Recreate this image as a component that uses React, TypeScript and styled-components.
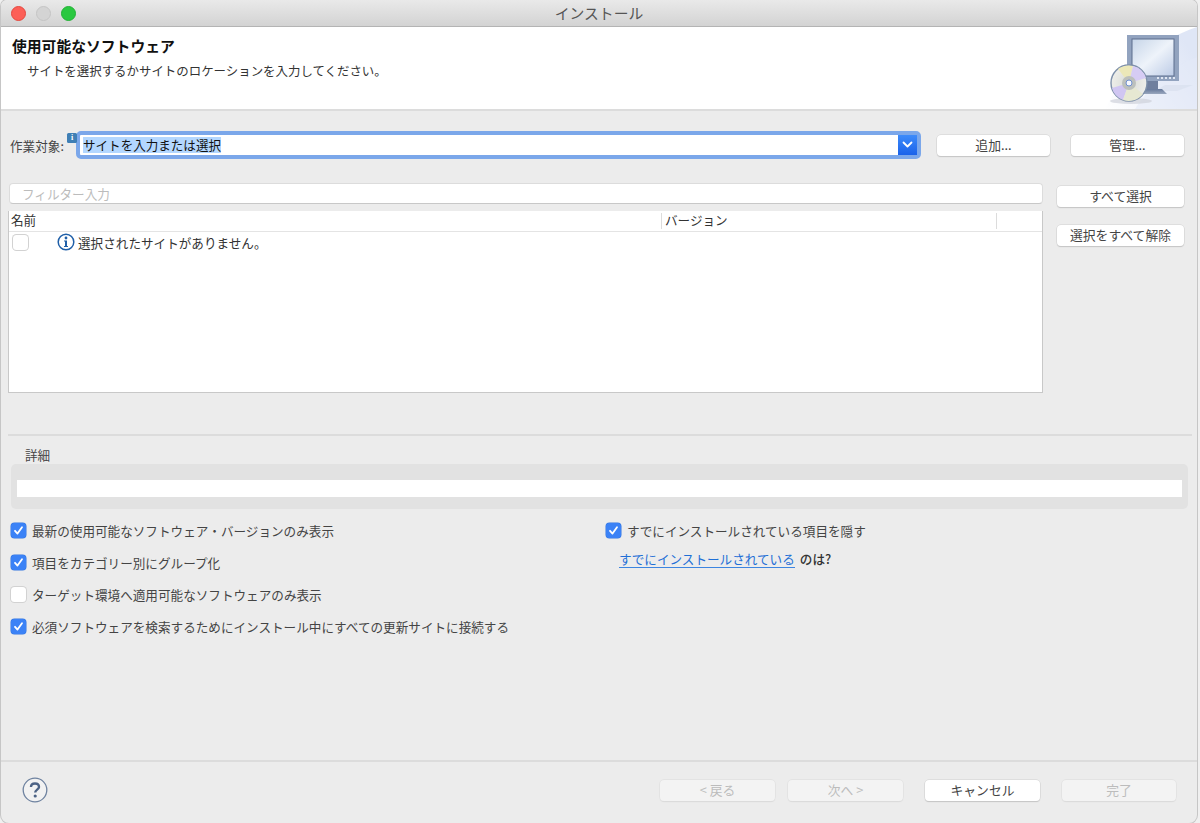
import React from "react";
import styled, { createGlobalStyle } from "styled-components";

const Global = createGlobalStyle`
  html, body { margin: 0; padding: 0; height: 100%; background: #f0f0f0; overflow: hidden; }
  #root { height: 823px; }
  * { box-sizing: border-box; }
`;

const Page = styled.div`
  width: 1200px;
  height: 823px;
  padding: 0 3px 0 1px;
  background: #f0f0f0;
  font-family: "Noto Sans CJK JP", "Liberation Sans", sans-serif;
  font-size: 12.6px;
  color: #3c3c3c;
`;

const Window = styled.div`
  height: 823px;
  display: flex;
  flex-direction: column;
  background: #ececec;
  border-radius: 6px 6px 8px 8px;
  box-shadow: 0 0 0 1px #c6c6c6;
  overflow: hidden;
`;

const TitleBar = styled.div`
  height: 27px;
  flex: none;
  position: relative;
  display: flex;
  align-items: center;
  justify-content: center;
  padding-bottom: 2px;
  background: linear-gradient(#e9e9e9, #d3d3d3);
  border-bottom: 1px solid #b4b4b4;
  font-size: 14.8px;
  color: #555;
`;

const Lights = styled.div`
  position: absolute;
  left: 10px;
  top: 6px;
  display: flex;
  gap: 10px;
`;

const Light = styled.span<{ $c: string; $b: string }>`
  width: 15px;
  height: 15px;
  border-radius: 50%;
  background: ${(p) => p.$c};
  border: 1px solid ${(p) => p.$b};
`;

const Header = styled.header`
  height: 84px;
  flex: none;
  display: flex;
  justify-content: space-between;
  background: #fff;
  border-bottom: 2px solid #dcdcdc;
`;

const HeaderText = styled.div`
  padding: 9px 0 0 11px;
`;

const HeaderTitle = styled.div`
  font-size: 14.8px;
  font-weight: 700;
  line-height: 20px;
  color: #111;
`;

const HeaderSub = styled.div`
  margin: 5px 0 0 15px;
  font-size: 12.45px;
  line-height: 20px;
  color: #333;
`;

const Main = styled.main`
  flex: 1;
  display: flex;
  flex-direction: column;
  min-height: 0;
`;

const WorkRow = styled.div`
  margin-top: 20px;
  height: 28px;
  display: flex;
  align-items: center;
  padding-left: 9px;
`;

const WorkLabel = styled.label`
  width: 66px;
  flex: none;
  padding-top: 1px;
  color: #444;
`;

const Combo = styled.div`
  position: relative;
  width: 845px;
  height: 28px;
  flex: none;
  display: flex;
  border: 4px solid #7ba7ea;
  border-radius: 5px;
  background: #fff;
`;

const ComboBadge = styled.span`
  position: absolute;
  left: -13px;
  top: -2px;
  width: 10px;
  height: 10px;
  border-radius: 1.5px;
  background: #3f7fb5;
  color: #fff;
  font: 700 8px/10px "Liberation Serif", serif;
  text-align: center;
`;

const ComboField = styled.div`
  flex: 1;
  padding-left: 3px;
  display: flex;
  align-items: center;
`;

const Selected = styled.span`
  background: #b3d7ff;
  color: #111;
  font-size: 12.55px;
  line-height: 16px;
`;

const ComboArrow = styled.div`
  width: 19px;
  display: flex;
  align-items: center;
  justify-content: center;
  background: linear-gradient(#3d8bfa, #1a62ea);
`;

const Button = styled.button<{ $w: number; $off?: boolean }>`
  width: ${(p) => p.$w}px;
  height: 21px;
  flex: none;
  padding: 0 0 2px;
  border: none;
  border-radius: 4px;
  font-family: inherit;
  font-size: 12.8px;
  line-height: 19px;
  background: ${(p) => (p.$off ? "#f3f3f3" : "#fff")};
  color: ${(p) => (p.$off ? "#bcbcbc" : "#444")};
  box-shadow: ${(p) =>
    p.$off
      ? "0 0 0 0.5px #dedede, 0 0.5px 1px #d8d8d8"
      : "0 0 0 0.5px #cfcfcf, 0 1px 1px #bdbdbd"};
`;

const AddButton = styled(Button)`
  margin-left: 16px;
`;

const ManageButton = styled(Button)`
  margin-left: 21px;
`;

const SelectArea = styled.div`
  margin-top: 24px;
  padding-left: 7px;
  display: flex;
`;

const LeftCol = styled.div`
  width: 1035px;
  flex: none;
`;

const Filter = styled.div`
  height: 21px;
  margin-left: 1px;
  padding: 0 0 1px 12px;
  display: flex;
  align-items: center;
  background: #fff;
  border-radius: 4px;
  border: 1px solid #dcdcdc;
  border-bottom-color: #c8c8c8;
  color: #bcbcbc;
`;

const Table = styled.div`
  margin-top: 7px;
  height: 182px;
  background: #fff;
  border-left: 1px solid #c8c8c8;
  border-right: 1px solid #c8c8c8;
  border-bottom: 1px solid #c8c8c8;
`;

const TableHead = styled.div`
  height: 21px;
  display: flex;
  align-items: center;
  border-bottom: 1px solid #e4e4e4;
  color: #333;
`;

const HeadCell = styled.div<{ $w: number; $pad: number }>`
  width: ${(p) => p.$w}px;
  height: 16px;
  padding-left: ${(p) => p.$pad}px;
  line-height: 14px;
  border-right: 1px solid #dcdcdc;
`;

const TableRow = styled.div`
  display: flex;
  align-items: center;
  height: 18px;
  margin-top: 1px;
  padding-left: 4px;
`;

const RowIcon = styled.svg`
  margin-left: 29px;
  flex: none;
`;

const RowText = styled.span`
  margin-left: 3px;
  color: #333;
`;

const RightCol = styled.div`
  margin: 3px 0 0 14px;
  display: flex;
  flex-direction: column;
  gap: 18px;
`;

const Separator = styled.div`
  margin: 41px 5px 0 7px;
  height: 2px;
  background: #dcdcdc;
`;

const DetailLabel = styled.div`
  margin: 10px 0 0 24px;
  height: 18px;
  line-height: 17px;
  color: #444;
`;

const DetailBox = styled.div`
  margin: 0 9px 0 10px;
  height: 45px;
  padding: 16px 6px 0;
  background: #e2e2e2;
  border-radius: 5px;
`;

const DetailField = styled.div`
  height: 17px;
  background: #fff;
`;

const Options = styled.div`
  margin-top: 5px;
  display: flex;
`;

const OptionCol = styled.div<{ $w: number }>`
  width: ${(p) => p.$w}px;
  padding-left: 10px;
  flex: none;
`;

const Option = styled.div`
  height: 32px;
  display: flex;
  align-items: center;
  gap: 6px;
  color: #444;
`;

const Box = styled.span<{ $on?: boolean }>`
  width: 15px;
  height: 15px;
  flex: none;
  display: flex;
  align-items: center;
  justify-content: center;
  border-radius: 3.5px;
  background: ${(p) => (p.$on ? "#3b82f6" : "#fff")};
  box-shadow: ${(p) => (p.$on ? "0 0 0 0.5px #3577e0" : "0 0 0 1px #d2d2d2")};
`;

const LinkLine = styled.div`
  height: 26px;
  padding: 4px 0 0 13px;
  display: flex;
  align-items: flex-start;
  gap: 5px;
`;

const DocLink = styled.a`
  color: #1f6fd6;
  line-height: 17px;
  border-bottom: 1px solid #3d85e0;
`;

const Question = styled.span`
  font-weight: 500;
  line-height: 17px;
  color: #333;
`;

const Footer = styled.footer`
  height: 63px;
  flex: none;
  display: flex;
  align-items: flex-start;
  padding: 18px 21px 0 21px;
  border-top: 2px solid #dcdcdc;
`;

const Help = styled.svg`
  flex: none;
  margin-top: -3px;
`;

const FooterButtons = styled.div`
  margin-left: auto;
  display: flex;
`;

const NextButton = styled(Button)`
  margin-left: 13px;
`;

const CancelButton = styled(Button)`
  margin-left: 22px;
`;

const FinishButton = styled(Button)`
  margin-left: 22px;
`;

const Check = () => (
  <svg width="11" height="11" viewBox="0 0 11 11" aria-hidden="true">
    <path d="M2 5.8 L4.5 8.6 L9 2.2" fill="none" stroke="#fff" strokeWidth="1.8" strokeLinecap="round" strokeLinejoin="round" />
  </svg>
);

const CdMonitor = () => (
  <svg width="92" height="82" viewBox="0 0 92 82" aria-hidden="true">
    <defs>
      <linearGradient id="bgGrad" x1="0" y1="1" x2="1" y2="0.4">
        <stop offset="0" stopColor="#ffffff" />
        <stop offset="1" stopColor="#dfe6f6" />
      </linearGradient>
      <linearGradient id="scrGrad" x1="0" y1="0" x2="1" y2="1">
        <stop offset="0" stopColor="#c6d5e8" />
        <stop offset="0.5" stopColor="#eef3fa" />
        <stop offset="1" stopColor="#bccbe6" />
      </linearGradient>
      <linearGradient id="standGrad" x1="0" y1="0" x2="0" y2="1">
        <stop offset="0" stopColor="#66789a" />
        <stop offset="1" stopColor="#9aa8bf" />
      </linearGradient>
      <radialGradient id="discGrad" cx="0.5" cy="0.5" r="0.5">
        <stop offset="0" stopColor="#d8dbd6" />
        <stop offset="1" stopColor="#eeeeea" />
      </radialGradient>
    </defs>
    <path d="M0 82 C20 42 50 14 92 0 L92 82 Z" fill="url(#bgGrad)" />
    <path d="M30 82 C46 58 64 40 92 30 L92 82 Z" fill="#e4e9f7" opacity="0.55" />
    <ellipse cx="26" cy="74" rx="21" ry="3" fill="#cfd2da" opacity="0.7" />
    <path d="M50 64 H72 L88 58 L60 58 Z" fill="#d9dfee" opacity="0.7" />
    <rect x="22" y="8" width="52" height="46" fill="#92a3bf" />
    <rect x="27" y="12" width="42" height="37" fill="url(#scrGrad)" stroke="#5d6e8e" strokeWidth="1" />
    <rect x="40" y="54" width="13" height="8" fill="#6f7f9e" />
    <path d="M37 62 H57 L62 67 H32 Z" fill="url(#standGrad)" />
    <g fill="#dfe6f2">
      <rect x="52" y="50" width="2" height="2" />
      <rect x="56" y="50" width="2" height="2" />
      <rect x="60" y="50" width="2" height="2" />
      <rect x="64" y="50" width="2" height="2" />
      <rect x="68" y="50" width="2" height="2" />
    </g>
    <circle cx="24" cy="56" r="18" fill="url(#discGrad)" stroke="#7e90aa" strokeWidth="1.4" />
    <path d="M24 56 L13 42 A18 18 0 0 1 28 39 Z" fill="#ece8b8" />
    <path d="M24 56 L28 39 A18 18 0 0 1 41 51 Z" fill="#d6ccf4" />
    <path d="M24 56 L7 61 A18 18 0 0 0 18 73 Z" fill="#d0c6f2" />
    <path d="M24 56 L18 73 A18 18 0 0 0 38 67 Z" fill="#e6e8d2" />
    <circle cx="24" cy="56" r="7" fill="#bcc0bc" />
    <circle cx="24" cy="56" r="3" fill="#f6f8fc" stroke="#6f8fd0" strokeWidth="1" />
  </svg>
);

const App = () => (
  <Page>
    <Global />
    <Window>
      <TitleBar>
        <Lights>
          <Light $c="#fc5f57" $b="#e4483f" />
          <Light $c="#d4d4d4" $b="#c4c4c4" />
          <Light $c="#2ac840" $b="#22b136" />
        </Lights>
        インストール
      </TitleBar>
      <Header>
        <HeaderText>
          <HeaderTitle>使用可能なソフトウェア</HeaderTitle>
          <HeaderSub>サイトを選択するかサイトのロケーションを入力してください。</HeaderSub>
        </HeaderText>
        <CdMonitor />
      </Header>
      <Main>
        <WorkRow>
          <WorkLabel>作業対象:</WorkLabel>
          <Combo>
            <ComboBadge>i</ComboBadge>
            <ComboField>
              <Selected>サイトを入力または選択</Selected>
            </ComboField>
            <ComboArrow>
              <svg width="11" height="8" viewBox="0 0 11 8" aria-hidden="true">
                <path d="M1.5 1.5 L5.5 5.5 L9.5 1.5" fill="none" stroke="#fff" strokeWidth="1.8" strokeLinecap="round" strokeLinejoin="round" />
              </svg>
            </ComboArrow>
          </Combo>
          <AddButton $w={113}>追加...</AddButton>
          <ManageButton $w={113}>管理...</ManageButton>
        </WorkRow>
        <SelectArea>
          <LeftCol>
            <Filter>フィルター入力</Filter>
            <Table>
              <TableHead>
                <HeadCell $w={653} $pad={2}>名前</HeadCell>
                <HeadCell $w={335} $pad={3}>バージョン</HeadCell>
              </TableHead>
              <TableRow>
                <Box />
                <RowIcon width="18" height="18" viewBox="0 0 18 18" aria-hidden="true">
                  <circle cx="9" cy="9" r="7.8" fill="#fff" stroke="#1f5fa8" strokeWidth="1.5" />
                  <circle cx="9" cy="5" r="1.4" fill="#1f5fa8" />
                  <path d="M7 7.6 H10 V13 H11 V14 H7 V13 H8 V8.6 H7 Z" fill="#1f5fa8" />
                </RowIcon>
                <RowText>選択されたサイトがありません。</RowText>
              </TableRow>
            </Table>
          </LeftCol>
          <RightCol>
            <Button $w={127}>すべて選択</Button>
            <Button $w={127}>選択をすべて解除</Button>
          </RightCol>
        </SelectArea>
        <Separator />
        <DetailLabel>詳細</DetailLabel>
        <DetailBox>
          <DetailField />
        </DetailBox>
        <Options>
          <OptionCol $w={595}>
            <Option><Box $on><Check /></Box>最新の使用可能なソフトウェア・バージョンのみ表示</Option>
            <Option><Box $on><Check /></Box>項目をカテゴリー別にグループ化</Option>
            <Option><Box />ターゲット環境へ適用可能なソフトウェアのみ表示</Option>
            <Option><Box $on><Check /></Box>必須ソフトウェアを検索するためにインストール中にすべての更新サイトに接続する</Option>
          </OptionCol>
          <OptionCol $w={500}>
            <Option><Box $on><Check /></Box>すでにインストールされている項目を隠す</Option>
            <LinkLine>
              <DocLink>すでにインストールされている</DocLink>
              <Question>のは?</Question>
            </LinkLine>
          </OptionCol>
        </Options>
      </Main>
      <Footer>
        <Help width="26" height="26" viewBox="0 0 26 26" aria-hidden="true">
          <circle cx="13" cy="13" r="11.8" fill="#f2f2f2" stroke="#6f83a0" strokeWidth="1.3" />
          <path d="M9 10 C9 7.5 11 6.5 13 6.5 C15.5 6.5 17 8 17 10 C17 12.5 13.2 12.8 13.2 15.5" fill="none" stroke="#4d6385" strokeWidth="2.4" />
          <circle cx="13.2" cy="19" r="1.6" fill="#4d6385" />
        </Help>
        <FooterButtons>
          <Button $w={115} $off>&lt; 戻る</Button>
          <NextButton $w={115} $off>次へ &gt;</NextButton>
          <CancelButton $w={115}>キャンセル</CancelButton>
          <FinishButton $w={114} $off>完了</FinishButton>
        </FooterButtons>
      </Footer>
    </Window>
  </Page>
);

export default App;
